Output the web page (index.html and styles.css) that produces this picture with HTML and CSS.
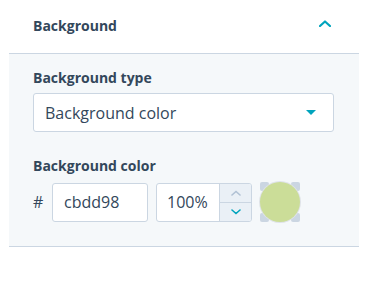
FILE: index.html
```html
<!DOCTYPE html>
<html lang="en">
<head>
    <meta charset="UTF-8">
    <title>Background</title>
    <link rel="stylesheet" href="styles.css">
</head>
<body>

<div class="panel">
    <div class="panel-header">
        <span class="panel-title">Background</span>
        <svg class="chevron" width="12" height="7" viewBox="0 0 12 7">
            <path d="M1 6 L6 1.5 L11 6" fill="none" stroke="#00a4bd" stroke-width="2.2" stroke-linecap="round" stroke-linejoin="round"/>
        </svg>
    </div>

    <div class="panel-body">
        <label class="field-label">Background type</label>
        <div class="select">
            <span>Background color</span>
            <svg width="10" height="5" viewBox="0 0 10 5"><path d="M0 0 H10 L5 5 Z" fill="#00a4bd"/></svg>
        </div>

        <label class="field-label second">Background color</label>
        <div class="color-row">
            <span class="hash">#</span>
            <div class="input hex">cbdd98</div>
            <div class="input opacity">
                <span class="value">100%</span>
                <div class="stepper">
                    <div class="step">
                        <svg width="10" height="6" viewBox="0 0 10 6"><path d="M1 5 L5 1.5 L9 5" fill="none" stroke="#b0c1d4" stroke-width="1.6" stroke-linecap="round"/></svg>
                    </div>
                    <div class="step">
                        <svg width="10" height="6" viewBox="0 0 10 6"><path d="M1 1 L5 4.5 L9 1" fill="none" stroke="#00a4bd" stroke-width="1.6" stroke-linecap="round"/></svg>
                    </div>
                </div>
            </div>
            <div class="swatch">
                <span class="corner tl"></span>
                <span class="corner tr"></span>
                <span class="corner bl"></span>
                <span class="corner br"></span>
                <span class="dot"></span>
            </div>
        </div>
    </div>
</div>

</body>
</html>
```

FILE: styles.css
```css
body {
    margin: 0;
    background-color: #fff;
    font-family: 'Open Sans', sans-serif;
    color: #33475b;
}
.panel {
    margin-left: 9px;
    width: 350px;
}
.panel-header {
    height: 54px;
    border-bottom: 1px solid #cbd6e2;
    display: flex;
    align-items: center;
    justify-content: space-between;
    padding: 0 28px 0 24px;
    box-sizing: border-box;
}
.panel-title {
    font-size: 14px;
    font-weight: bold;
    margin-top: -3px;
}
.chevron {
    margin-top: -6px;
}
.panel-body {
    background-color: #f5f8fa;
    border-bottom: 1px solid #cbd6e2;
    padding: 15px 25px 24px 24px;
}
.field-label {
    display: block;
    font-size: 14px;
    font-weight: bold;
    line-height: 18px;
}
.field-label.second {
    margin-top: 25px;
}
.select {
    margin-top: 6px;
    height: 39px;
    box-sizing: border-box;
    background-color: #fff;
    border: 1px solid #cbd6e2;
    border-radius: 3px;
    display: flex;
    align-items: center;
    justify-content: space-between;
    padding: 0 17px 0 11px;
    font-size: 16px;
}
.color-row {
    margin-top: 7px;
    display: flex;
    align-items: center;
}
.hash {
    font-size: 16px;
    width: 19px;
}
.input {
    height: 39px;
    box-sizing: border-box;
    background-color: #fff;
    border: 1px solid #cbd6e2;
    border-radius: 3px;
    font-size: 16px;
    display: flex;
    align-items: center;
}
.hex {
    width: 96px;
    padding-left: 11px;
}
.opacity {
    width: 96px;
    margin-left: 8px;
    overflow: hidden;
}
.opacity .value {
    flex: 1;
    padding-left: 10px;
}
.stepper {
    width: 31px;
    height: 100%;
    background-color: #eaf0f6;
    border-left: 1px solid #cbd6e2;
    display: flex;
    flex-direction: column;
}
.step {
    flex: 1;
    display: flex;
    align-items: center;
    justify-content: center;
}
.step + .step {
    border-top: 1px solid #cbd6e2;
}
.swatch {
    position: relative;
    width: 40px;
    height: 40px;
    margin-left: 8px;
}
.corner {
    position: absolute;
    width: 9px;
    height: 9px;
    background-color: #cbd6e2;
    border-radius: 2px;
}
.tl { top: 0; left: 0; }
.tr { top: 0; right: 0; }
.bl { bottom: 0; left: 0; }
.br { bottom: 0; right: 0; }
.dot {
    position: absolute;
    inset: 0;
    border-radius: 50%;
    background-color: #cbdd98;
    box-shadow: 0 0 0 1px #dfe3e8;
}
```
